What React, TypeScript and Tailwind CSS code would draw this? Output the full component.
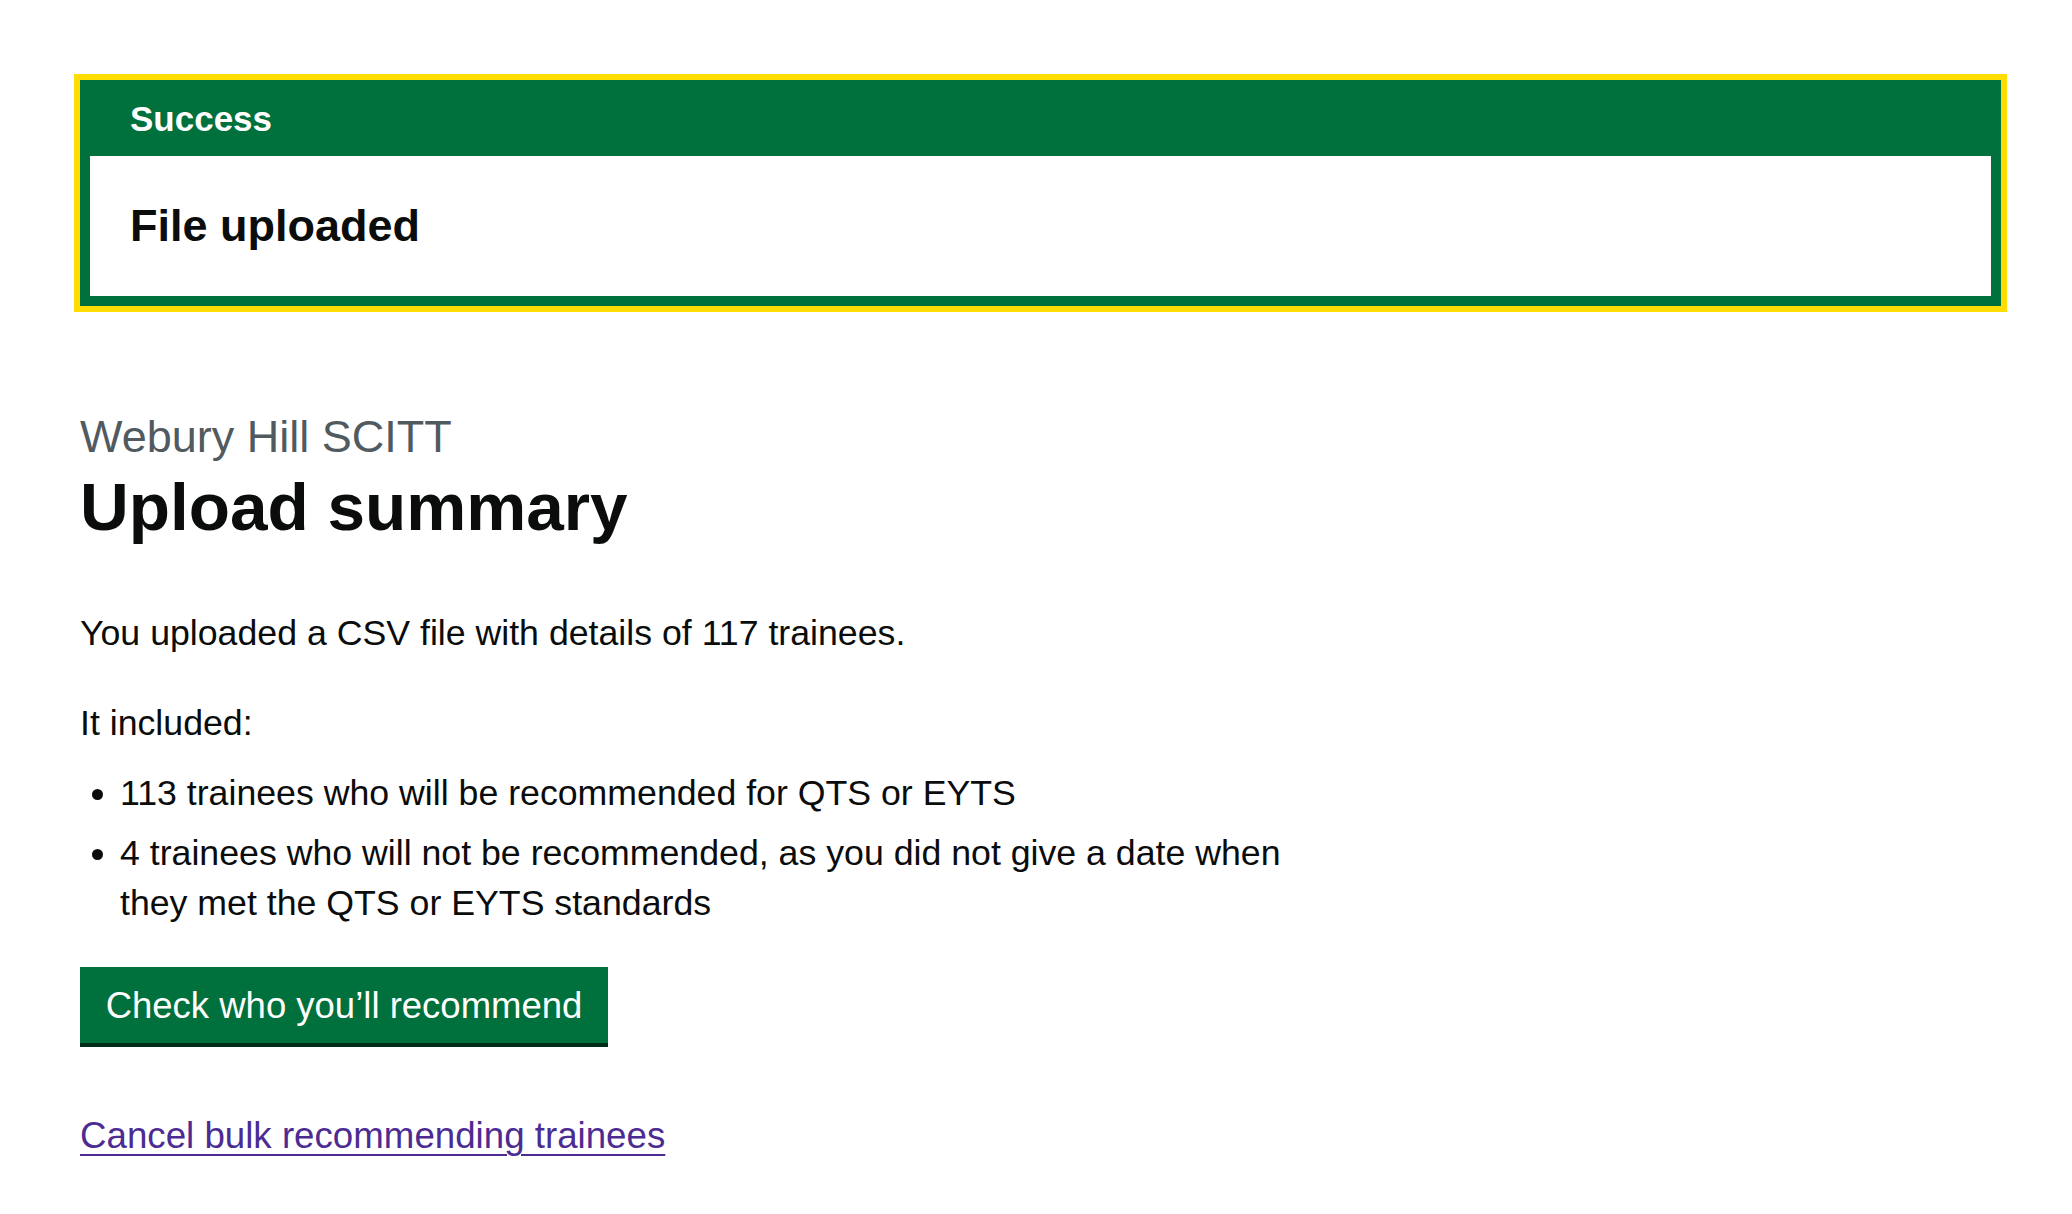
import React from 'react';

const items = [
  "113 trainees who will be recommended for QTS or EYTS",
  "4 trainees who will not be recommended, as you did not give a date when they met the QTS or EYTS standards",
];

export default function App() {
  return (
    <div className="min-h-screen bg-white text-[#0b0c0c] font-['Liberation_Sans',Arial,sans-serif]">
      <main className="ml-[80px] w-[1921px] pt-[80px] pb-[40px]">
        {/* Success banner */}
        <div className="border-[10px] border-[#00703c] bg-[#00703c] shadow-[0_0_0_6px_#ffdd00]">
          <div className="pt-[4px] pb-[12px] px-[40px]">
            <h2 className="text-[35px] leading-[50px] font-bold text-white">Success</h2>
          </div>
          <div className="bg-white p-[40px]">
            <p className="text-[45px] leading-[60px] font-bold">File uploaded</p>
          </div>
        </div>

        <div className="mt-[101px] w-[1220px]">
          <span className="block text-[45px] leading-[60px] text-[#505a5f]">Webury Hill SCITT</span>
          <h1 className="text-[67.5px] leading-[80px] font-bold mb-[61px]">Upload summary</h1>

          <p className="text-[35.7px] leading-[50px] mb-[40px]">
            You uploaded a CSV file with details of 117 trainees.
          </p>
          <p className="text-[35.7px] leading-[50px] mb-[20px]">It included:</p>
          <ul className="list-disc pl-[40px] mb-[39px] text-[35.7px] leading-[50px]">
            {items.map((item, idx) => (
              <li key={idx} className="mb-[10px]">{item}</li>
            ))}
          </ul>

          <button className="block w-[528px] border-[4px] border-transparent bg-[#00703c] pt-[16px] pb-[14px] text-center text-[36.5px] leading-[38px] text-white shadow-[0_4px_0_#002d18]">
            Check who you’ll recommend
          </button>

          <div className="mt-[68px]">
            <a
              href="#"
              className="text-[36.7px] leading-[50px] text-[#4c2c92] underline decoration-[2px] underline-offset-[6px]"
            >
              Cancel bulk recommending trainees
            </a>
          </div>
        </div>
      </main>
    </div>
  );
}
